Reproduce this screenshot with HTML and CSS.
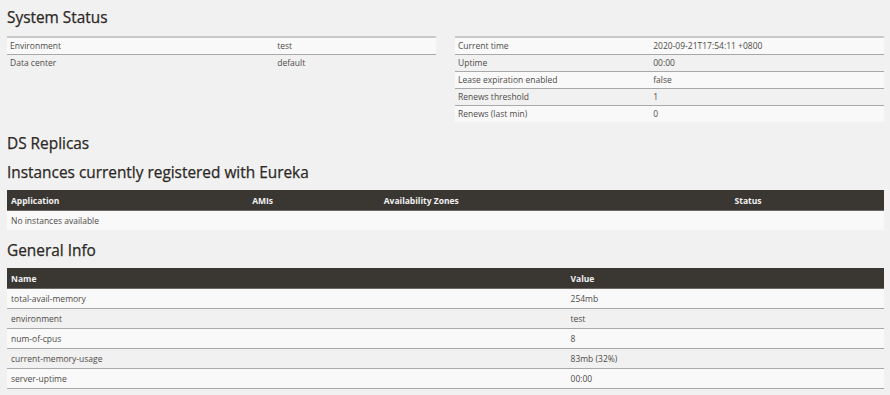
FILE: index.html
```html
<!DOCTYPE html>
<html lang="en">
<head>
<meta charset="UTF-8">
<title>Eureka</title>
<link rel="stylesheet" href="styles.css">
</head>
<body class="page">

<h1 class="title">System Status</h1>
<div class="status-row">
    <table class="status">
        <tr><td class="label-left">Environment</td><td>test</td></tr>
        <tr><td class="label-left">Data center</td><td>default</td></tr>
    </table>
    <table class="status">
        <tr><td class="label-right">Current time</td><td>2020-09-21T17:54:11 +0800</td></tr>
        <tr><td class="label-right">Uptime</td><td>00:00</td></tr>
        <tr><td class="label-right">Lease expiration enabled</td><td>false</td></tr>
        <tr><td class="label-right">Renews threshold</td><td>1</td></tr>
        <tr><td class="label-right">Renews (last min)</td><td>0</td></tr>
    </table>
</div>

<h1 class="title replicas">DS Replicas</h1>
<h1 class="title">Instances currently registered with Eureka</h1>
<table class="grid instances">
    <thead>
        <tr><th class="c-app">Application</th><th class="c-ami">AMIs</th><th class="c-zone">Availability Zones</th><th>Status</th></tr>
    </thead>
    <tbody>
        <tr><td colspan="4">No instances available</td></tr>
    </tbody>
</table>

<h1 class="title">General Info</h1>
<table class="grid info">
    <thead>
        <tr><th class="c-name">Name</th><th>Value</th></tr>
    </thead>
    <tbody>
        <tr><td>total-avail-memory</td><td>254mb</td></tr>
        <tr><td>environment</td><td>test</td></tr>
        <tr><td>num-of-cpus</td><td>8</td></tr>
        <tr><td>current-memory-usage</td><td>83mb (32%)</td></tr>
        <tr><td>server-uptime</td><td>00:00</td></tr>
    </tbody>
</table>

</body>
</html>
```
FILE: styles.css
```css
.page {
    margin: 0;
    padding: 0 6px 0 7px;
    background-color: #f1f1f1;
    color: #4f4b48;
    font-family: "Open Sans", "DejaVu Sans", sans-serif;
    font-size: 8.5px;
}

.title {
    margin: 0;
    padding: 8px 0;
    font-size: 15.4px;
    font-weight: 400;
    line-height: 19px;
    color: #2b2724;
    -webkit-text-stroke: 0.25px #2b2724; /* a touch heavier, like the medium heading face */
}

.replicas {
    padding-top: 9px;
    padding-bottom: 2px;
}

.status-row {
    display: grid;
    grid-template-columns: 1fr 1fr;
    align-items: start;
    gap: 19px;
    margin-top: 1px;
    margin-bottom: 3px;
}

table {
    border-collapse: collapse;
    width: 100%;
}

.status tr {
    border-top: 1px solid #a9a9a9;
}

.status tr:first-child {
    border-top: 2px solid #c9c9c9;
}

.status tr:nth-child(odd) {
    background-color: #f9f9f9;
}

.status td {
    height: 16px;
    padding: 0 3px;
    line-height: 16px;
}

.label-left {
    width: 62.3%;
}

.label-right {
    width: 45.5%;
}

.grid th {
    height: 20px;
    padding: 0 4px;
    background-color: #3a3632;
    color: #f1f1f1;
    font-weight: 700;
    text-align: left;
    border-bottom: 1px solid #6d6863;
}

.grid td {
    height: 19px;
    padding: 0 4px;
}

.instances tbody tr {
    background-color: #f9f9f9;
}

.instances {
    margin-bottom: 3px;
}

.c-app {
    width: 27.5%;
}

.c-ami {
    width: 15%;
}

.c-zone {
    width: 40%;
}

.c-name {
    width: 63.8%;
}

.info tbody tr {
    border-bottom: 1px solid #a9a9a9;
}

.info tbody tr:nth-child(odd) {
    background-color: #f9f9f9;
}
```
